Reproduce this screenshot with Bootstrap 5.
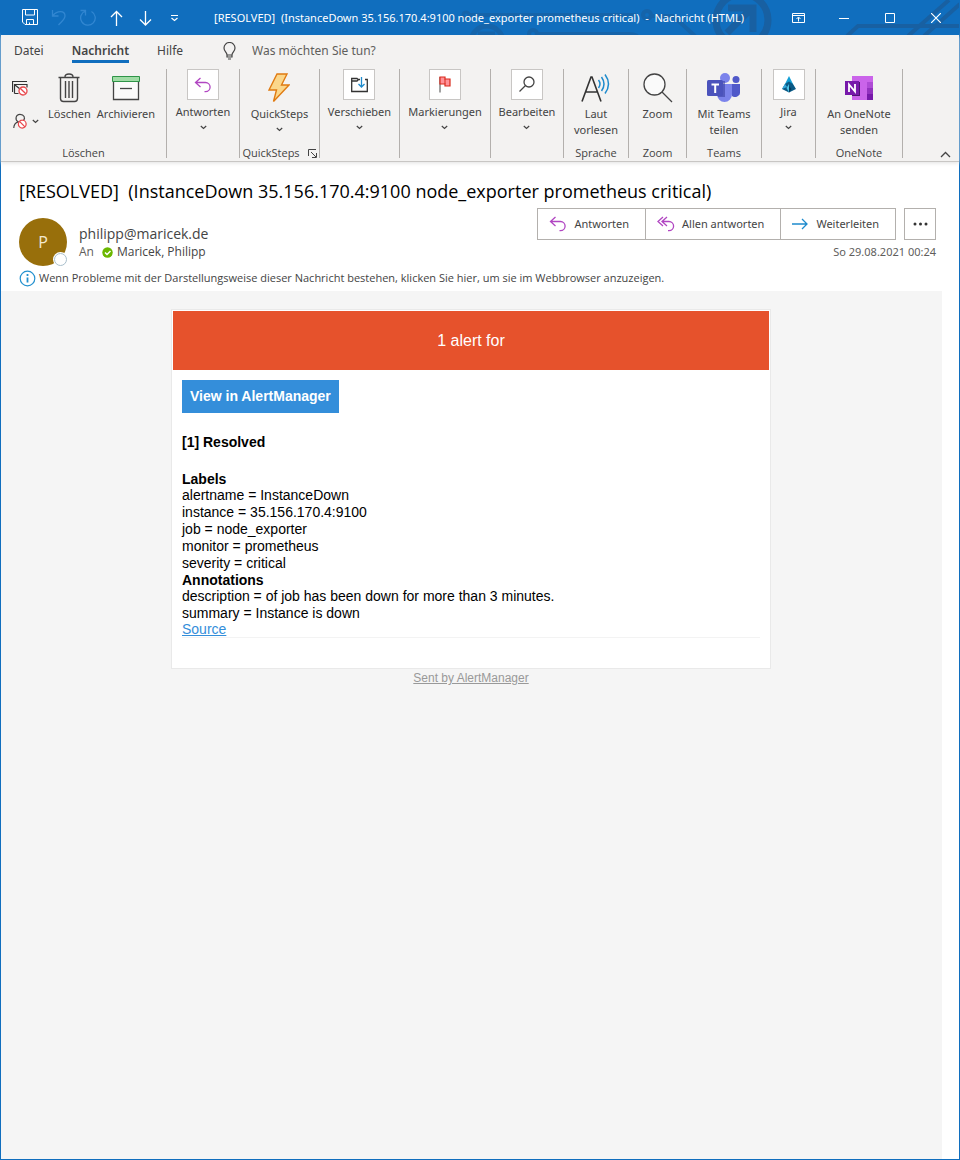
<!DOCTYPE html>
<html lang="de">
<head>
<meta charset="utf-8">
<meta name="viewport" content="width=device-width, initial-scale=1">
<title>[RESOLVED] (InstanceDown 35.156.170.4:9100 node_exporter prometheus critical) - Nachricht (HTML)</title>
<link href="https://cdn.jsdelivr.net/npm/bootstrap@5.3.0/dist/css/bootstrap.min.css" rel="stylesheet">
<style>
  :root { --blue: #106ebe; --ink: #444; --line: #b3b0ad; }
  body { font-family: "Open Sans", "Noto Sans", sans-serif; font-size: 12px; line-height: 16px; color: var(--ink); background: #fff; }
  svg { display: block; flex: none; }
  .window { min-height: 100vh; border: solid var(--blue); border-width: 0 1px 1px; }
  button { background: none; border: 0; padding: 0; color: inherit; font-size: inherit; }

  .titlebar { height: 35px; background: var(--blue); color: #fff; }
  .titlebar .deco { top: 0; right: 0; }
  .titletext { font-family: "Noto Sans", "Open Sans", sans-serif; font-size: 11px; white-space: pre; padding-right: 12px; }
  .quick { padding-left: 20px; }
  .quick button { width: 29px; flex: none; }
  .faded { opacity: .3; }
  .wintools button { width: 46px; height: 35px; display: flex; align-items: center; justify-content: center; }

  .chrome { background: #f3f2f1; border-bottom: 1px solid #c8c6c4; box-shadow: 0 1px 4px #e1e1e1; }
  .tabs { height: 29px; padding-left: 13px; gap: 28px; font-size: 12px; }
  .tabs a { color: var(--ink); text-decoration: none; line-height: 24px; height: 28px; padding-top: 4px; }
  .tabs a.current { font-weight: 600; border-bottom: 3px solid var(--blue); }
  .tellme { color: #605e5c; background: none; border: 0; outline: 0; padding: 0; width: 180px; line-height: 20px; font-size: 12px; }
  .tellme::placeholder { color: #605e5c; opacity: 1; }
  .tabs, .tellme { font-family: "Noto Sans", "Open Sans", sans-serif; }
  .tabs label { padding-top: 2px; margin-left: 12px; }

  .ribbon { padding: 5px 0 3px; font-family: "Noto Sans", "Open Sans", sans-serif; font-size: 11px; }
  .rgroup { height: 89px; border-right: 1px solid var(--line); display: flex; flex-direction: column; align-items: center; justify-content: space-between; }
  .rgroup .cap { font-family: "Open Sans", "Noto Sans", sans-serif; line-height: 10px; }
  .g73 { width: 73px; } .g80 { width: 80px; } .g91 { width: 91px; } .g65 { width: 65px; }
  .g58 { width: 58px; } .g75 { width: 75px; } .g54 { width: 54px; } .g87 { width: 87px; } .g166 { width: 166px; }
  .rbtn { display: flex; flex-direction: column; align-items: center; line-height: 16px; white-space: nowrap; }
  .rbtn .pic { height: 37px; display: flex; align-items: center; }
  .rbtn .boxed { width: 32px; height: 31px; margin-bottom: 4px; background: #fff; border: 1px solid #c8c6c4; display: flex; align-items: center; justify-content: center; }
  .bigpair { gap: 6px; }
  .smallcol { width: 41px; padding: 7px 0 0 7px; }
  .collapse-btn { padding: 0 8px 0 0; }

  .mailhead { padding: 17px 23px 4px 18px; }
  .subject { font-size: 18px; line-height: 24px; color: #000; white-space: pre; margin: 0; padding-bottom: 5px; }
  .avatar { width: 48px; height: 48px; border-radius: 50%; background: #986f0b; color: #f3e9d0; font-size: 16px; }
  .presence { width: 13px; height: 13px; right: 0; bottom: 0; border: 1px solid #a9bfcc; border-radius: 50%; background: #fff; box-shadow: 0 0 0 1px #fff; }
  .who { padding: 5px 0 0 12px; }
  .sender { font-size: 14px; line-height: 21px; }
  .headright { padding-bottom: 6px; }
  .actions, .sentdate { font-family: "Noto Sans", "Open Sans", sans-serif; font-size: 11px; }
  .actions button { height: 32px; border: 1px solid var(--line); padding: 0 16px 0 11px; display: flex; align-items: center; gap: 7px; }
  .actions button + button { margin-left: -1px; }
  .actions .more { width: 32px; padding: 0; justify-content: center; margin-left: 8px !important; }
  .muted { color: #605e5c; }
  .notice { font-size: 11px; line-height: 18px; text-align: left; padding-top: 3px; gap: 3px; }

  .mailbody { background: #f5f5f5; margin-right: 17px; padding: 18px 1px 0 0; font-family: "Liberation Sans", Arial, sans-serif; font-size: 14px; color: #000; }
  .alertbox { width: 100%; max-width: 600px; background: #fff; border: 1px solid #e9e9e9; padding: 1px 1px 30px; }
  .banner { background: #e6522c; color: #fff; font-size: 16px; line-height: 59px; text-align: center; }
  .content { padding: 10px 9px 0; }
  .view { display: inline-block; background: #348eda; color: #fff; font-weight: 700; text-decoration: none; line-height: 17px; padding: 8px; }
  .status { line-height: 16px; margin: 21px 0; }
  .details { border-bottom: 1px solid #f3f3f3; line-height: 17px; }
  .details h2 { font-size: 14px; line-height: 16px; font-weight: 700; margin: 0; }
  .source { color: #348eda; display: table; line-height: 15px; }
  .sent { color: #999; font-size: 12px; line-height: 18px; }
</style>
</head>
<body>
<svg width="0" height="0" class="position-absolute" aria-hidden="true">
  <symbol id="chev" viewBox="0 0 7 5"><path d="M.8 1 3.5 3.5 6.2 1" fill="none" stroke="#444" stroke-width="1.2"/></symbol>
  <symbol id="reply" viewBox="0 0 18 16"><path d="M6.500 1 1.500 5.500l5 4.500M2 5.500h9.500a4.600 4.600 0 0 1 0 9.200h-1" fill="none" stroke="#b146c2" stroke-width="1.300"/></symbol>
  <symbol id="block" viewBox="0 0 10 10"><circle cx="5" cy="5" r="4" fill="#fff" stroke="#e8474c" stroke-width="1.300"/><path d="m2.200 2.200 5.600 5.600" stroke="#e8474c" stroke-width="1.300"/></symbol>
</svg>

<div class="window d-flex flex-column">
  <header class="titlebar position-relative d-flex align-items-center">
    <svg class="deco position-absolute" width="500" height="35" viewBox="459 0 500 35" fill="none" stroke="#1860a2" stroke-width="4">
      <g opacity=".7"><circle cx="466" cy="15" r="3" stroke-width="3"/><path d="M470 15h166"/><circle cx="647" cy="15" r="4"/><path d="M651 16h22l22 20"/>
      <circle cx="487" cy="42" r="16" stroke-width="5"/><path d="M478 34h17" stroke-width="5"/>
      <circle cx="533" cy="34" r="4"/><path d="M538 34h90q8 0 10 3"/></g>
      <circle cx="742" cy="20" r="26" stroke-width="7"/><path d="M728 8h25v24M752 8l-25 25" stroke-width="7"/>
      <path d="m847 36 11-10h101M908 36l41-36M924 36l36-32"/>
    </svg>
    <div class="quick d-flex position-relative">
      <button aria-label="Speichern"><svg width="18" height="17" viewBox="0 0 18 17" fill="none" stroke="#fff"><path d="M1.500.500h15v15H4l-2.500-2.500zM4.500.500v5.500h9V.500M5.500 15.500v-5h7v5M8.500 15.500v-2"/></svg></button>
      <button class="faded" aria-label="Rückgängig"><svg width="18" height="17" viewBox="0 0 18 17" fill="none" stroke="#7fc0ff" stroke-width="1.300"><path d="M2.500 1v6h6M3 6.500C7 1.500 15 1 15 7c0 3-3 5-6.500 9"/></svg></button>
      <button class="faded" aria-label="Wiederholen"><svg width="18" height="17" viewBox="0 0 18 17" fill="none" stroke="#7fc0ff" stroke-width="1.300"><path d="M1.500 1.500h5v5M6.500 2a7.300 7.300 0 1 0 6 .5"/></svg></button>
      <button aria-label="Vorheriges Element"><svg width="18" height="17" viewBox="0 0 18 17" fill="none" stroke="#fff" stroke-width="1.300"><path d="M8.500 17V2.500M3 8l5.500-5.500L14 8"/></svg></button>
      <button aria-label="Nächstes Element"><svg width="18" height="17" viewBox="0 0 18 17" fill="none" stroke="#fff" stroke-width="1.300"><path d="M8.500 2v14M3 10.500 8.500 16l5.500-5.500"/></svg></button>
      <button aria-label="Symbolleiste anpassen"><svg width="18" height="17" viewBox="0 0 18 17" fill="none" stroke="#fff" stroke-width="1.200"><path d="M5 6.500h7M5.500 9l3 2.500 3-2.500"/></svg></button>
    </div>
    <div class="titletext flex-grow-1 text-center position-relative">[RESOLVED]  (InstanceDown 35.156.170.4:9100 node_exporter prometheus critical)  -  Nachricht (HTML)</div>
    <div class="wintools d-flex position-relative">
      <button aria-label="Menüband-Anzeigeoptionen"><svg width="13" height="10" viewBox="0 0 13 10" fill="none" stroke="#fff"><path d="M.500.500h12v9H.500zM.500 2.500h12M6.500 8.500v-4M4.500 6l2-2 2 2"/></svg></button>
      <button aria-label="Minimieren"><svg width="10" height="10" stroke="#fff"><path d="M0 5.500h10"/></svg></button>
      <button aria-label="Maximieren"><svg width="10" height="10" fill="none" stroke="#fff"><path d="M.500.500h9v9h-9z"/></svg></button>
      <button aria-label="Schließen"><svg width="10" height="10" stroke="#fff" stroke-width="1.200"><path d="m0 0 10 10M10 0 0 10"/></svg></button>
    </div>
  </header>

  <div class="chrome">
    <nav class="tabs d-flex">
      <a href="#">Datei</a>
      <a href="#" class="current">Nachricht</a>
      <a href="#">Hilfe</a>
      <label class="d-flex align-items-center gap-3"><svg width="13" height="18" viewBox="0 0 13 18" fill="none" stroke="#444" stroke-width="1.200"><path d="M4 13c0-3-3-3.500-3-7a5.500 5.500 0 0 1 11 0c0 3.500-3 4-3 7zM4 13v2h5v-2M5 17h3"/></svg><input class="tellme" type="text" placeholder="Was möchten Sie tun?" aria-label="Was möchten Sie tun?"></label>
    </nav>
    <div class="ribbon d-flex">
      <section class="rgroup g166">
        <div class="bigpair d-flex w-100">
          <div class="smallcol d-flex flex-column align-items-start">
            <button class="mt-1 ms-1" aria-label="Ignorieren"><svg width="17" height="17" viewBox="0 0 17 17"><path d="M.500 12V1.500H15M2.500 13.500v-9H15v3M2.500 13.500h4M3 5l5 4" fill="none" stroke="#333" stroke-width="1.200"/><use href="#block" x="6" y="6" width="10" height="10"/></svg></button>
            <button class="mt-3 d-flex align-items-center gap-1" aria-label="Junk-E-Mail"><svg class="ms-1" width="16" height="16" viewBox="0 0 16 18"><path d="M1 17c0-4 2-6 5-7-4-2-3-8.500 2-8.500S14 6 12 8" fill="none" stroke="#444" stroke-width="1.300"/><use href="#block" x="5" y="7" width="11" height="11"/></svg><svg width="7" height="5"><use href="#chev"/></svg></button>
          </div>
          <button class="rbtn"><span class="pic"><svg width="22" height="30" viewBox="0 0 22 30" fill="none" stroke="#444" stroke-width="1.400"><path d="M.500 4.500h21M7 4c0-4 8-4 8 0M2.500 4.500v21q0 3 3 3h11q3 0 3-3v-21M7.500 8v17M11 8v17M14.500 8v17"/></svg></span>Löschen</button>
          <button class="rbtn"><span class="pic"><svg width="28" height="26" viewBox="0 0 28 26"><path d="M1.500 5v19.500h25V5" fill="#fafafa" stroke="#444" stroke-width="1.300"/><path d="M.500 1.500h27v5H.500z" fill="#9fdba5" stroke="#2e9448"/><path d="M8 13.500h12" stroke="#444" stroke-width="1.300"/></svg></span>Archivieren</button>
        </div>
        <div class="cap">Löschen</div>
      </section>
      <section class="rgroup g73"><button class="rbtn"><span class="boxed"><svg width="18" height="16"><use href="#reply"/></svg></span>Antworten<svg class="mt-1" width="7" height="7"><use href="#chev"/></svg></button></section>
      <section class="rgroup g80">
        <button class="rbtn"><span class="pic"><svg width="22" height="30" viewBox="0 0 22 30"><path d="M9 1h10l-5.500 11H21L5.500 28.500l3-11.500H1z" fill="#fbd78b" stroke="#e07b12" stroke-width="1.400"/></svg></span>QuickSteps<svg class="mt-1" width="7" height="7"><use href="#chev"/></svg></button>
        <div class="cap d-flex gap-2">QuickSteps<button aria-label="QuickSteps verwalten"><svg width="9" height="9" viewBox="0 0 9 9" fill="none" stroke="#444"><path d="M.500 7V.500H8M3 3l5 5M8.500 4v4.500H4"/></svg></button></div>
      </section>
      <section class="rgroup g80"><button class="rbtn"><span class="boxed"><svg width="17" height="16" viewBox="0 0 17 16" fill="none" stroke="#333" stroke-width="1.300"><path d="M9 2.500H7l-1-1H.700v13h15.600v-12H14M.500 4h5.500l1.500-1.500"/><path d="M10.500 0v10M7.500 7l3 3 3-3" stroke="#1e8bcd"/></svg></span>Verschieben<svg class="mt-1" width="7" height="7"><use href="#chev"/></svg></button></section>
      <section class="rgroup g91"><button class="rbtn"><span class="boxed"><svg width="12" height="17" viewBox="0 0 12 17"><path d="M1 1v15.500" stroke="#444"/><path d="M1 1h5v2h5v7H6V8H1z" fill="#ff9299" stroke="#d92a1c" stroke-width="1.200"/><path d="M6 3v5" stroke="#d92a1c"/></svg></span>Markierungen<svg class="mt-1" width="7" height="7"><use href="#chev"/></svg></button></section>
      <section class="rgroup g73"><button class="rbtn"><span class="boxed"><svg width="16" height="17" viewBox="0 0 16 17" fill="none" stroke="#444" stroke-width="1.300"><circle cx="10" cy="6" r="5"/><path d="M6.500 9.500.500 15.500"/></svg></span>Bearbeiten<svg class="mt-1" width="7" height="7"><use href="#chev"/></svg></button></section>
      <section class="rgroup g65"><button class="rbtn"><span class="pic"><svg width="29" height="29" viewBox="0 0 29 29" fill="none"><path d="M1 28.500 10 4h1l9 24.500M4.500 19h12" stroke="#333" stroke-width="1.600"/><path d="M17.500 7q3 4 0 8M20.500 4q5 7 0 14M24 1.500q7 9.500 0 19" stroke="#1e8bcd" stroke-width="1.500"/></svg></span>Laut<br>vorlesen</button><div class="cap">Sprache</div></section>
      <section class="rgroup g58"><button class="rbtn"><span class="pic"><svg width="30" height="30" viewBox="0 0 30 30" stroke="#444" stroke-width="1.300"><circle cx="11.500" cy="11.500" r="10.500" fill="#fafafa"/><path d="m19 19 10 10"/></svg></span>Zoom</button><div class="cap">Zoom</div></section>
      <section class="rgroup g75"><button class="rbtn"><span class="pic"><svg width="34" height="30" viewBox="0 0 34 30"><circle cx="29" cy="6.500" r="3.500" fill="#5059c9"/><path d="M25 11h8v9a5 5 0 0 1-8 3z" fill="#5059c9"/><circle cx="18" cy="5" r="5" fill="#7b83eb"/><path d="M10 11h15v10.500a7.500 7.500 0 0 1-15 0z" fill="#7b83eb"/><path d="M12 8h6v16h-7z" fill="#343a9a" opacity=".55"/><path d="M0 8.500q0-1.500 1.500-1.500h13q1.500 0 1.500 1.500v13q0 1.500-1.500 1.500h-13Q0 23 0 21.500z" fill="#4b53bc"/><path d="M4.500 11.500h7.500M8.200 11v9" stroke="#fff" stroke-width="2"/></svg></span>Mit Teams<br>teilen</button><div class="cap">Teams</div></section>
      <section class="rgroup g54"><button class="rbtn"><span class="boxed"><svg width="14" height="17" viewBox="0 0 14 17"><path d="M7 0 11 8H3z" fill="#129fd6"/><path d="M7 5.500 11 8l3 5-7 3.500L0 13l3-5z" fill="#0a5a86"/><path d="m3 8 2 3-5 2z" fill="#35a9dc"/><path d="M7 8v8.500L4.500 12z" fill="#4cc3e8"/><path d="m7 10 2.500 3L7 16.500z" fill="#063a5b"/></svg></span>Jira<svg class="mt-1" width="7" height="7"><use href="#chev"/></svg></button></section>
      <section class="rgroup g87"><button class="rbtn"><span class="pic"><svg width="28" height="24" viewBox="0 0 28 24"><path d="M7 0h21v24H7z" fill="#ca64ea"/><path d="M22 6h6v6h-6z" fill="#ae4bd5"/><path d="M22 12h6v6h-6z" fill="#9332bf"/><path d="M22 18h6v6h-6z" fill="#7719aa"/><path d="M7 6h8v14H7z" fill="#4d1370"/><path d="M0 5h14v14H0z" fill="#7719aa"/><path d="M4 16V8.500l6 7V8" fill="none" stroke="#fff" stroke-width="1.800"/></svg></span>An OneNote<br>senden</button><div class="cap">OneNote</div></section>
      <button class="collapse-btn ms-auto align-self-end" aria-label="Menüband reduzieren"><svg width="11" height="7" fill="none" stroke="#444" stroke-width="1.300"><path d="m1 6 4.500-4.500L10 6"/></svg></button>
    </div>
  </div>

  <main class="d-flex flex-column flex-grow-1">
    <div class="mailhead">
      <h1 class="subject fw-normal">[RESOLVED]  (InstanceDown 35.156.170.4:9100 node_exporter prometheus critical)</h1>
      <div class="d-flex justify-content-between">
        <div class="d-flex align-self-end">
          <div class="avatar position-relative d-flex align-items-center justify-content-center">P<span class="presence position-absolute"></span></div>
          <div class="who">
            <div class="sender">philipp@maricek.de</div>
            <div class="d-flex align-items-center"><span class="muted me-2">An</span><svg width="11" height="11" viewBox="0 0 11 11" class="me-1"><circle cx="5.500" cy="5.500" r="5.200" fill="#6bb700"/><path d="m3 5.500 2 2 3.500-3.500" fill="none" stroke="#fff" stroke-width="1.500"/></svg>Maricek, Philipp</div>
          </div>
        </div>
        <div class="headright">
          <div class="actions d-flex">
            <button><svg width="18" height="16"><use href="#reply"/></svg>Antworten</button>
            <button><svg width="18" height="16" viewBox="0 0 18 16" fill="none" stroke="#b146c2" stroke-width="1.300"><path d="M6 1 1 5.500 6 10M10 1 5 5.500l5 4.500M5.500 5.500H12a4.600 4.600 0 0 1 0 9.200h-1"/></svg>Allen antworten</button>
            <button><svg width="17" height="12" viewBox="0 0 17 12" fill="none" stroke="#1e8bcd" stroke-width="1.300"><path d="M0 6h15M10 1l5 5-5 5"/></svg>Weiterleiten</button>
            <button class="more" aria-label="Weitere Aktionen"><svg width="15" height="4" fill="#333"><circle cx="2" cy="2" r="1.500"/><circle cx="7.500" cy="2" r="1.500"/><circle cx="13" cy="2" r="1.500"/></svg></button>
          </div>
          <div class="sentdate text-end muted pt-1">So 29.08.2021 00:24</div>
        </div>
      </div>
      <button class="notice d-flex align-items-center"><svg width="17" height="17" viewBox="0 0 17 17" fill="none" stroke="#2491cf"><circle cx="8.500" cy="8.500" r="7.300" stroke-width="1.200"/><path d="M8.500 4v2M8.500 7.500v5" stroke-width="1.800"/></svg>Wenn Probleme mit der Darstellungsweise dieser Nachricht bestehen, klicken Sie hier, um sie im Webbrowser anzuzeigen.</button>
    </div>

    <div class="mailbody flex-grow-1 d-flex flex-column align-items-center">
      <article class="alertbox">
        <div class="banner">1 alert for</div>
        <div class="content">
          <a class="view" href="#">View in AlertManager</a>
          <p class="status fw-bold">[1] Resolved</p>
          <div class="details">
            <h2>Labels</h2>
            <div>alertname = InstanceDown</div>
            <div>instance = 35.156.170.4:9100</div>
            <div>job = node_exporter</div>
            <div>monitor = prometheus</div>
            <div>severity = critical</div>
            <h2>Annotations</h2>
            <div>description = of job has been down for more than 3 minutes.</div>
            <div>summary = Instance is down</div>
            <a class="source" href="#">Source</a>
          </div>
        </div>
      </article>
      <a class="sent" href="#">Sent by AlertManager</a>
    </div>
  </main>
</div>
<script src="https://cdn.jsdelivr.net/npm/bootstrap@5.3.0/dist/js/bootstrap.bundle.min.js"></script>
</body>
</html>
